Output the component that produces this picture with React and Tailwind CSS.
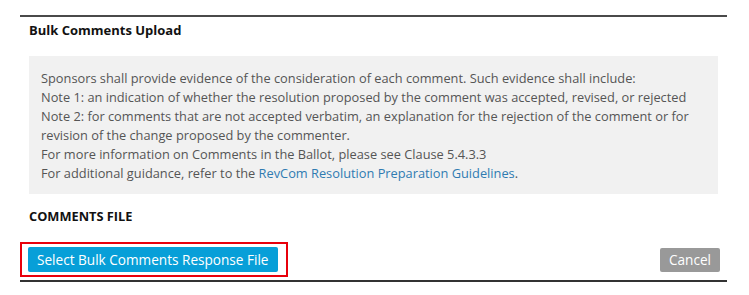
import React from 'react';

const FONT = { fontFamily: '"Open Sans", "Liberation Sans", sans-serif' };

export default function App() {
  return (
    <div className="bg-white w-[749px] h-[295px] pt-[15px] px-[20px]" style={FONT}>
      <div className="w-[707px] border-t-2 border-b-2 border-t-[#4a4a4a] border-b-[#333] pb-[3px]">
        {/* Header */}
        <h2 className="px-[9px] pt-[3px] text-[13px] font-bold text-[#111] leading-[20px]">
          Bulk Comments Upload
        </h2>

        {/* Guidance box */}
        <div className="mx-[9px] mt-[16px] bg-[#f1f1f1] px-[12px] pt-[13px] pb-[11px] text-[12.8px] leading-[19px] text-[#555]">
          <p>Sponsors shall provide evidence of the consideration of each comment. Such evidence shall include:</p>
          <p>Note 1: an indication of whether the resolution proposed by the comment was accepted, revised, or rejected</p>
          <p>
            Note 2: for comments that are not accepted verbatim, an explanation for the rejection of the comment or for
            revision of the change proposed by the commenter.
          </p>
          <p>For more information on Comments in the Ballot, please see Clause 5.4.3.3</p>
          <p>
            For additional guidance, refer to the{' '}
            <a href="#" className="text-[#2f7bb1]">RevCom Resolution Preparation Guidelines</a>.
          </p>
        </div>

        {/* Comments file */}
        <div className="px-[9px] mt-[13px] text-[12.8px] font-bold text-[#111] leading-[18px]">COMMENTS FILE</div>

        <div className="flex items-center justify-between mt-[17px] pr-[7px]">
          <div className="border-2 border-[#e8000b] py-[3px] pl-[6px] pr-[8px]">
            <button className="bg-[#079fd8] text-white text-[13.6px] leading-[25px] h-[25px] px-[9px] rounded-[2px]">
              Select Bulk Comments Response File
            </button>
          </div>
          <button className="bg-[#999] text-white text-[13.6px] leading-[24px] h-[24px] px-[9px] rounded-[2px] mt-px">
            Cancel
          </button>
        </div>
      </div>
    </div>
  );
}
